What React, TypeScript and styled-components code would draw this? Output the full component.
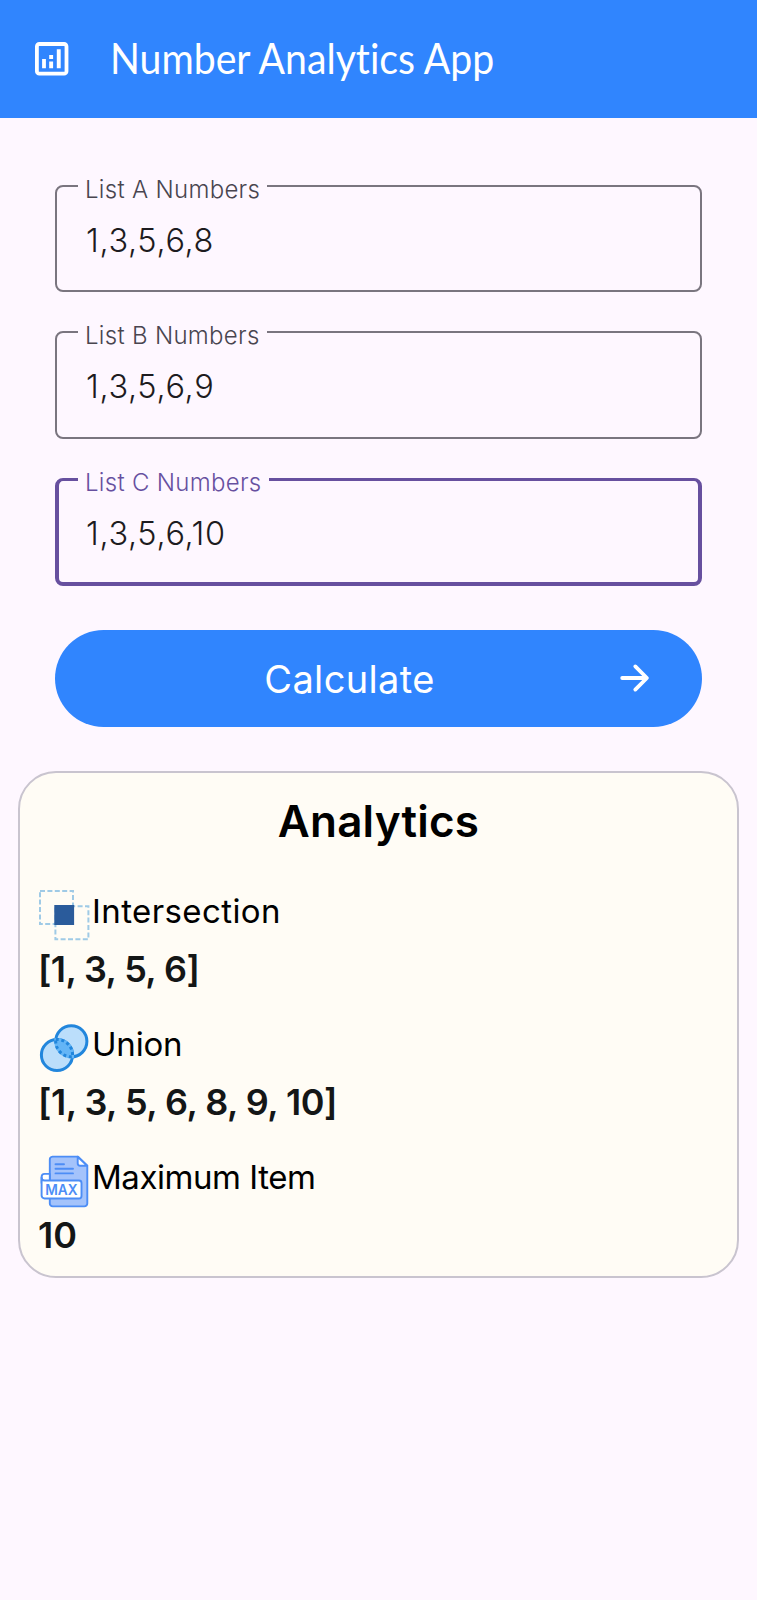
import React from 'react';
import styled, { createGlobalStyle } from 'styled-components';

const GlobalStyle = createGlobalStyle`
  *, *::before, *::after { box-sizing: border-box; }
  body {
    margin: 0;
    background: #fef7ff;
    font-family: Inter, 'Liberation Sans', sans-serif;
    color: #1d1b20;
  }
`;

const Screen = styled.div`
  min-height: 1600px;
  display: flex;
  flex-direction: column;
  background: #fef7ff;
`;

const AppBar = styled.header`
  height: 118px;
  flex: none;
  display: flex;
  align-items: center;
  gap: 41px;
  padding-left: 35px;
  background: #3085fe;
  color: #fff;
  svg { flex: none; }
`;

const AppTitle = styled.h1`
  margin: 0 0 2px;
  font: 400 43px/60px Lato, 'Liberation Sans', sans-serif;
  font-variant-ligatures: none;
  white-space: nowrap;
  transform: scaleX(0.912);
  transform-origin: left center;
`;

const Form = styled.form`
  display: flex;
  flex-direction: column;
  padding: 51px 55px 0;
`;

const Field = styled.fieldset<{ $active?: boolean }>`
  min-width: 0;
  height: 124px;
  margin: 0 0 23px;
  padding: 0 0 0 ${(p) => (p.$active ? 19 : 21)}px;
  border-style: solid;
  border-color: ${(p) => (p.$active ? '#67509f' : '#7a757f')};
  border-width: ${(p) => (p.$active ? '3px 4px 4px' : '2px')};
  border-radius: 8px;
  &:first-child { height: 123px; }
`;

const FieldLabel = styled.legend<{ $active?: boolean }>`
  height: 34px;
  padding: 7px 7px 0;
  font-size: 24px;
  font-weight: 300;
  line-height: 28px;
  letter-spacing: 0.3px;
  color: ${(p) => (p.$active ? '#67509f' : '#49454f')};
`;

const FieldValue = styled.div`
  padding: 18px 0 0 8px;
  font-size: 32.5px;
  font-weight: 300;
  line-height: 40px;
  letter-spacing: 0.65px;
`;

const CalculateButton = styled.button`
  display: flex;
  align-items: center;
  height: 97px;
  margin: 21px 0 44px;
  padding: 0 46px 0 32px;
  border: 0;
  border-radius: 49px;
  background: #3085fe;
  color: #fff;
  font-family: inherit;
  font-size: 38px;
  letter-spacing: 0.35px;
  svg { flex: none; margin-bottom: 1px; }
`;

const ButtonText = styled.span`
  flex: 1;
  text-align: center;
`;

const Card = styled.section`
  height: 507px;
  margin: 0 18px;
  padding: 18px;
  border: 2px solid #c9c4cf;
  border-radius: 38px;
  background: #fffcf5;
`;

const CardTitle = styled.h2`
  margin: 0 0 38px;
  font-size: 44px;
  font-weight: 600;
  line-height: 60px;
  letter-spacing: 0.2px;
  text-align: center;
  color: #000;
`;

const Results = styled.div`
  display: flex;
  flex-direction: column;
  gap: 33px;
`;

const ResultHead = styled.div`
  display: flex;
  height: 53px;
  margin-bottom: 7px;
  svg { flex: none; }
`;

const ResultName = styled.span<{ $tracking: number }>`
  font-size: 33px;
  line-height: 45px;
  letter-spacing: ${(p) => p.$tracking}px;
  color: #000;
`;

const ResultValue = styled.div<{ $tracking: number }>`
  font-size: 36px;
  font-weight: 600;
  line-height: 40px;
  letter-spacing: ${(p) => p.$tracking}px;
  color: #141616;
`;

const AnalyticsIcon = () => (
  <svg width="34" height="34" viewBox="0 0 34 34">
    <rect x="1.9" y="2" width="29.6" height="29.6" rx="2.4" fill="none" stroke="#fff" strokeWidth="3.8" />
    <path fill="#fff" d="M7.1 17h3.8v9.2H7.1zM14.2 13h3.9v3.9h-3.9zM14.2 19.6h3.9v6.6h-3.9zM21.8 7.3h3.9v18.9h-3.9z" />
  </svg>
);

const ArrowIcon = () => (
  <svg width="44" height="44" viewBox="0 0 44 44" fill="none" stroke="#fff" strokeWidth="3.8" strokeLinecap="round" strokeLinejoin="round">
    <path d="M10.2 22H34M23.3 10.4L34.9 22L23.3 33.6" />
  </svg>
);

const IntersectionIcon = () => (
  <svg width="54" height="53" viewBox="0 0 54 53">
    <g fill="none" stroke="#9fcae6" strokeWidth="2" strokeDasharray="5 2.4">
      <rect x="2" y="2" width="33" height="33" />
      <rect x="17.4" y="17.2" width="33" height="33" />
    </g>
    <rect x="16.3" y="16" width="19.8" height="20" fill="#2a5b9b" />
  </svg>
);

const UnionIcon = () => (
  <svg width="54" height="53" viewBox="0 0 54 53">
    <g fill="#bbdefb" stroke="#2286dc" strokeWidth="3">
      <circle cx="33.3" cy="19.3" r="15.6" />
      <circle cx="19" cy="33" r="15.6" />
    </g>
    <path d="M17.8 17.5A15.6 15.6 0 0 1 34.5 34.8A15.6 15.6 0 0 1 17.8 17.5Z" fill="#64b5f6" stroke="#64b5f6" strokeWidth="3" />
    <path d="M17.8 17.5A15.6 15.6 0 0 1 34.5 34.8A15.6 15.6 0 0 1 17.8 17.5Z" fill="none" stroke="#2286dc" strokeWidth="3" strokeDasharray="3 2.6" />
  </svg>
);

const MaxIcon = () => (
  <svg width="54" height="53" viewBox="0 0 54 53" stroke="#4c8df6" strokeWidth="1.9" strokeLinejoin="round" strokeLinecap="round">
    <path fill="#a4c3fb" d="M14.5 1.6H40L49.3 10.6V48.4a3 3 0 0 1-3 3H14.8a3 3 0 0 1-3-3V4.6a3 3 0 0 1 2.7-3z" />
    <path fill="#fff" d="M39.7 1.8L49.2 10.7H42.2a2.5 2.5 0 0 1-2.5-2.5z" />
    <path fill="none" d="M17.5 9.2H26M17.5 13.8H35M17.5 18.4H35" />
    <path fill="#fff" d="M11.8 18.9H6.6a3 3 0 0 0-3 3V28h8.2z" />
    <path fill="#fff" d="M3.6 22.5a3 3 0 0 0 3 3H41a2.5 2.5 0 0 1 2.5 2.5V41a2.5 2.5 0 0 1-2.5 2.5H6.6a3 3 0 0 1-3-3z" />
    <text x="7.2" y="40.1" textLength="32.4" lengthAdjust="spacingAndGlyphs" fontFamily="Inter, sans-serif" fontSize="15" fontWeight="600" fill="#4c8df6" stroke="none">MAX</text>
  </svg>
);

const fields = [
  { label: 'List A Numbers', value: '1,3,5,6,8' },
  { label: 'List B Numbers', value: '1,3,5,6,9' },
  { label: 'List C Numbers', value: '1,3,5,6,10', active: true },
];

const results = [
  { name: 'Intersection', value: '[1, 3, 5, 6]', Icon: IntersectionIcon, nameTracking: 0.4, valueTracking: -0.6 },
  { name: 'Union', value: '[1, 3, 5, 6, 8, 9, 10]', Icon: UnionIcon, nameTracking: -0.2, valueTracking: -0.5 },
  { name: 'Maximum Item', value: '10', Icon: MaxIcon, nameTracking: -0.45, valueTracking: 0 },
];

export default function App() {
  return (
    <Screen>
      <GlobalStyle />
      <AppBar>
        <AnalyticsIcon />
        <AppTitle>Number Analytics App</AppTitle>
      </AppBar>
      <Form>
        {fields.map((f) => (
          <Field key={f.label} $active={f.active}>
            <FieldLabel $active={f.active}>{f.label}</FieldLabel>
            <FieldValue>{f.value}</FieldValue>
          </Field>
        ))}
        <CalculateButton type="button">
          <ButtonText>Calculate</ButtonText>
          <ArrowIcon />
        </CalculateButton>
      </Form>
      <Card>
        <CardTitle>Analytics</CardTitle>
        <Results>
          {results.map(({ name, value, Icon, nameTracking, valueTracking }) => (
            <div key={name}>
              <ResultHead>
                <Icon />
                <ResultName $tracking={nameTracking}>{name}</ResultName>
              </ResultHead>
              <ResultValue $tracking={valueTracking}>{value}</ResultValue>
            </div>
          ))}
        </Results>
      </Card>
    </Screen>
  );
}
